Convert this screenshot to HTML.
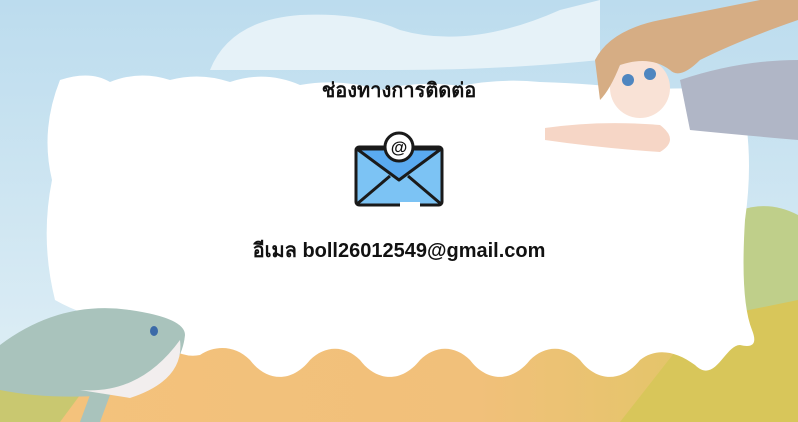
<!DOCTYPE html><html><head><meta charset="utf-8"><style>
body{margin:0;width:798px;height:422px;overflow:hidden;position:relative;font-family:"Liberation Sans","Noto Sans CJK SC",sans-serif}
svg{position:absolute;left:0;top:0}
.t{position:absolute;left:0;width:798px;text-align:center;font-weight:bold;color:#111}
</style></head><body>
<svg width="798" height="422" viewBox="0 0 798 422">
<defs>
<linearGradient id="sky" x1="0" y1="0" x2="0" y2="1"><stop offset="0" stop-color="#bcdcee"/><stop offset="1" stop-color="#e2f0f6"/></linearGradient>
<linearGradient id="gr" x1="0" y1="0" x2="1" y2="0"><stop offset="0" stop-color="#f4c27c"/><stop offset="0.6" stop-color="#f1c07a"/><stop offset="1" stop-color="#dcc860"/></linearGradient>
</defs>
<rect width="798" height="422" fill="url(#sky)"/>
<path d="M210 70 Q230 20 300 15 Q360 12 400 30 Q470 50 560 10 L600 0 L600 60 Q500 70 400 70Z" fill="#e6f2f8"/>
<rect x="0" y="345" width="798" height="77" fill="url(#gr)"/>
<path d="M720 220 Q760 195 798 215 L798 330 L720 330Z" fill="#bfcf8a"/>
<path d="M700 320 L798 300 L798 422 L620 422Z" fill="#d8c65a"/>
<path d="M0 375 L80 395 L60 422 L0 422Z" fill="#c9c870"/>
<!-- white blob -->
<path d="M60 80 Q90 70 110 82 Q140 70 170 80 Q200 72 230 82 Q265 70 300 85 Q340 78 380 90 Q420 80 460 86 Q500 78 540 82 Q600 84 640 90 Q700 86 740 92 Q755 150 745 220 Q740 300 752 330 Q760 350 740 345 C725 345 715 385 695 365 C675 350 655 348 640 360 C620 385 595 380 580 360 C565 345 545 345 530 360 C510 385 485 380 470 360 C455 345 435 345 420 360 C400 385 375 380 360 360 C345 345 325 345 310 360 C290 385 265 380 250 360 C235 345 215 345 200 355 Q175 360 150 330 Q90 320 55 300 Q40 240 52 180 Q40 130 60 80Z" fill="#fff"/>
<!-- whale -->
<path d="M0 345 Q60 300 130 310 Q185 318 185 335 Q180 385 110 395 Q50 400 0 390Z" fill="#a9c3bc"/>
<path d="M80 390 Q140 395 180 340 Q185 380 130 398Z" fill="#f2eeee"/>
<path d="M90 395 L110 395 L100 422 L80 422Z" fill="#a9c3bc"/>
<ellipse cx="154" cy="331" rx="4" ry="5" fill="#3c6aa8"/>
<!-- girl -->
<path d="M680 80 Q740 60 798 60 L798 140 Q740 135 690 130Z" fill="#b0b6c6"/>
<path d="M545 128 Q600 120 660 125 Q680 140 660 152 Q600 148 545 140Z" fill="#f6d6c6"/>
<ellipse cx="640" cy="88" rx="30" ry="30" fill="#f9e2d6"/>
<path d="M595 60 Q610 30 660 20 Q710 10 760 0 L798 0 L798 20 Q740 40 700 60 Q680 80 670 70 Q650 55 620 65 Q610 90 600 100Z" fill="#d6ad84"/>
<circle cx="628" cy="80" r="6" fill="#4f86c0"/><circle cx="650" cy="74" r="6" fill="#4f86c0"/>
<!-- envelope -->
<g stroke="#1a1a1a" stroke-width="3" stroke-linejoin="round">
<rect x="356" y="147" width="86" height="58" rx="3" fill="#7cc3f4"/>
<path d="M357 149 L399 180 L441 149Z" fill="#5aaaf0"/>
<path d="M357 204 L390 176 M441 204 L408 176" fill="none"/>
<circle cx="399" cy="147" r="14" fill="#fff"/>
</g>
<rect x="400" y="202" width="20" height="6" fill="#fff"/>
<text x="399" y="153" text-anchor="middle" font-family="Liberation Sans" font-weight="bold" font-size="17" fill="#111">@</text>
</svg>
<div class="t" style="top:74px;font-size:20px;">ช่องทางการติดต่อ</div>
<div class="t" style="top:234px;font-size:20px;">อีเมล boll26012549@gmail.com</div>
</body></html>
